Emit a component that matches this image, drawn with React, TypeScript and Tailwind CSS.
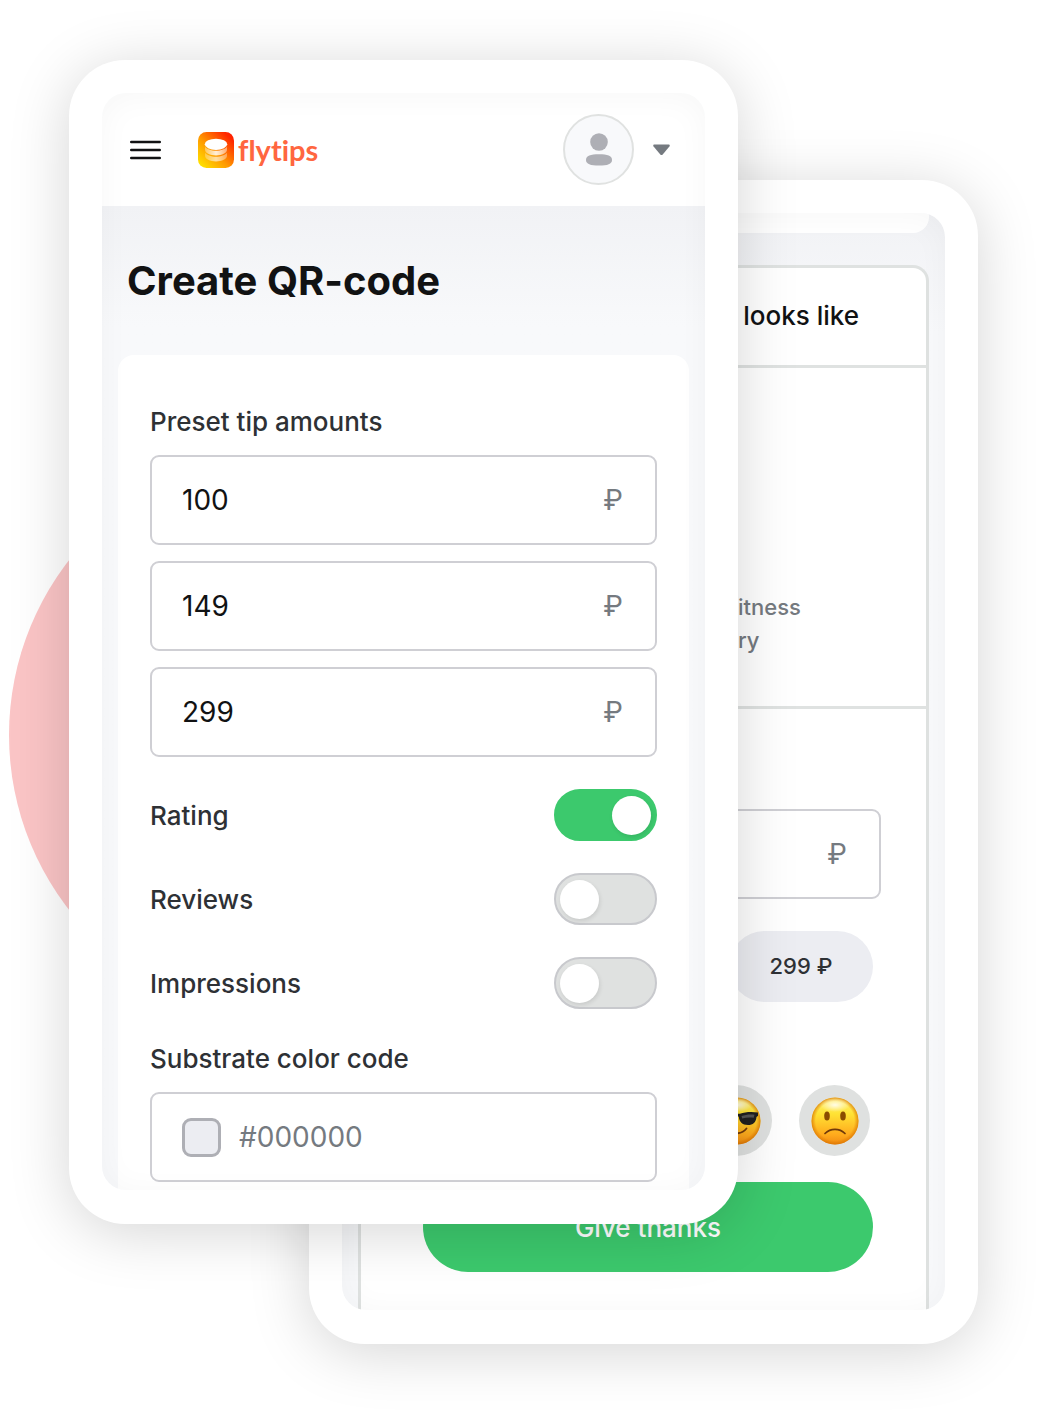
import { ReactNode, useId, useState } from "react";

const fieldBox =
  "flex h-[90px] items-center rounded-[9px] border-2 border-[#cfcfd4] bg-white pl-[30px] pr-8";

function Phone({ className, children }: { className: string; children: ReactNode }) {
  return (
    <section
      className={`relative isolate col-start-1 row-start-1 min-w-0 self-start rounded-[56px] bg-white px-[33px] pb-[34px] pt-[33px] shadow-[0_8px_60px_rgba(0,0,0,0.17)] ${className}`}
    >
      <div className="relative overflow-hidden rounded-[24px] bg-[#f8f9fb]">
        {children}
        <div className="pointer-events-none absolute inset-0 rounded-[24px] shadow-[inset_0_3px_32px_rgba(0,0,0,0.035)]" />
      </div>
    </section>
  );
}

function AmountField({ label, initial }: { label: string; initial: string }) {
  const [value, setValue] = useState(initial);
  return (
    <label className={fieldBox}>
      <input
        aria-label={label}
        value={value}
        onChange={(e) => setValue(e.target.value)}
        className="w-0 min-w-0 flex-1 bg-transparent text-[28px] text-[#111213] outline-none"
      />
      <span className="text-[28px] text-[#757a80]">₽</span>
    </label>
  );
}

function Toggle({ label, on = false }: { label: string; on?: boolean }) {
  const id = useId();
  return (
    <div className="flex items-center justify-between">
      <label htmlFor={id} className="text-[26px] font-medium text-[#2e3135]">
        {label}
      </label>
      <input
        id={id}
        type="checkbox"
        role="switch"
        defaultChecked={on}
        className="flex h-[52px] w-[103px] cursor-pointer appearance-none items-center rounded-full border-2 border-[#c8c9cd] bg-[#dfe1e0] px-1 before:size-[39px] before:rounded-full before:bg-white before:shadow-[1px_2px_4px_rgba(0,0,0,0.1)] checked:justify-end checked:border-[#3cc96d] checked:bg-[#3cc96d]"
      />
    </div>
  );
}

function LogoMark() {
  return (
    <svg width="36" height="36" viewBox="0 0 36 36" aria-hidden="true">
      <defs>
        <linearGradient id="logoBg" x1="0" y1="1" x2="1" y2="0">
          <stop offset="0" stopColor="#ffee00" />
          <stop offset="0.45" stopColor="#ff9800" />
          <stop offset="0.85" stopColor="#ff2a00" />
          <stop offset="1" stopColor="#ff1500" />
        </linearGradient>
        <linearGradient id="coin" x1="0" x2="1">
          <stop offset="0" stopColor="#fff" stopOpacity="0.35" />
          <stop offset="0.5" stopColor="#fff" stopOpacity="0.85" />
          <stop offset="1" stopColor="#fff" stopOpacity="0.45" />
        </linearGradient>
      </defs>
      <rect width="36" height="36" rx="8.5" fill="url(#logoBg)" />
      <path d="M7 20.6c1.500 2.600 6 4.200 11 4.200s9.500-1.600 11-4.200v3.200c0 3.200-5 5.600-11 5.600S7 27 7 23.800z" fill="url(#coin)" opacity="0.75" />
      <path d="M7 14.600c1.500 2.600 6 4.200 11 4.200s9.500-1.600 11-4.200v3.200c0 3.200-5 5.600-11 5.600S7 21 7 17.800z" fill="url(#coin)" />
      <ellipse cx="18" cy="12.300" rx="11.200" ry="5.600" fill="#fff" />
    </svg>
  );
}

function Face({ kind }: { kind: "cool" | "sad" }) {
  return (
    <svg width="48" height="48" viewBox="0 0 48 48" aria-hidden="true">
      <defs>
        <linearGradient id={`face-${kind}`} x1="0" y1="0" x2="0" y2="1">
          <stop offset="0" stopColor="#fff27a" />
          <stop offset="0.35" stopColor="#ffe234" />
          <stop offset="0.8" stopColor="#ffa91c" />
          <stop offset="1" stopColor="#f08a12" />
        </linearGradient>
        <radialGradient id={`rim-${kind}`}>
          <stop offset="0.82" stopColor="#e07800" stopOpacity="0" />
          <stop offset="1" stopColor="#d87400" stopOpacity="0.75" />
        </radialGradient>
        <radialGradient id={`shine-${kind}`}>
          <stop offset="0" stopColor="#fff" stopOpacity="0.85" />
          <stop offset="1" stopColor="#fff" stopOpacity="0" />
        </radialGradient>
      </defs>
      <circle cx="24" cy="24" r="23.500" fill={`url(#face-${kind})`} />
      <circle cx="24" cy="24" r="23.500" fill={`url(#rim-${kind})`} />
      <ellipse cx="24" cy="8" rx="15" ry="7" fill={`url(#shine-${kind})`} />
      {kind === "sad" ? (
        <>
          <ellipse cx="16" cy="19" rx="2.800" ry="4.500" fill="#8a4b00" />
          <ellipse cx="32" cy="19" rx="2.800" ry="4.500" fill="#8a4b00" />
          <path d="M14 36.500c5.500-5.500 14.500-5.500 20 0" fill="none" stroke="#70390a" strokeWidth="1.700" strokeLinecap="round" />
        </>
      ) : (
        <>
          <path d="M3 16c6-1.500 13-1 18 .8h6c5-1.800 11-2.300 18-1.300v3.300l-1.500 1.200c-.5 5.500-3.500 8-8.500 8-6 0-8.500-3-9.300-8.500h-3.400C21.500 25 19 28 13 28c-5 0-8-2.500-8.500-8L3 18.800z" fill="#202020" />
          <path d="M28.500 19c4-1.500 9-2 13-1.300l-.8 3c-4-.6-8-.3-11.500.8z" fill="#555" />
          <path d="M16 34c5 3.800 13 3 17.500-2.500" fill="none" stroke="#70390a" strokeWidth="1.800" strokeLinecap="round" />
        </>
      )}
    </svg>
  );
}

function PreviewPhone() {
  return (
    <Phone className="ml-[240px] mt-[120px]">
      <div className="bg-linear-to-b from-[#f1f2f5] to-[#f8f9fb] to-[120px] px-4">
        <div className="h-5 rounded-b-[16px] bg-white" />
        <div className="mt-8 rounded-t-[16px] border-x-[3px] border-t-[3px] border-[#dfe2e1] bg-white">
          <h2 className="border-b-[3px] border-[#dfe2e1] pb-[33px] pr-[67px] pt-8 text-right text-[26px] leading-8 font-medium text-[#111213]">
            looks like
          </h2>
          <div className="border-b-[3px] border-[#dfe2e1] pb-[49px] pt-[223px]">
            <p className="ml-auto w-[188px] text-[22px] leading-[33px] font-medium text-[#757a80]">
              itness
              <br />
              ry
            </p>
          </div>
          <div className="pb-[38px] pl-[54px] pr-[45px] pt-[100px]">
            <label className={fieldBox}>
              <input aria-label="Tip amount" className="w-0 min-w-0 flex-1 bg-transparent text-[28px] outline-none" />
              <span className="text-[28px] text-[#757a80]">₽</span>
            </label>
            <div className="mt-8 flex justify-end px-2">
              <button className="h-[71px] w-[144px] rounded-full bg-[#ecedf2] text-[22px] font-medium text-[#2e3135]">
                299 ₽
              </button>
            </div>
            <div className="mt-[83px] flex justify-end gap-[27px] px-[11px]">
              <button aria-label="Cool" className="flex size-[71px] items-center justify-center rounded-full bg-[#dfe1e0]">
                <Face kind="cool" />
              </button>
              <button aria-label="Sad" className="flex size-[71px] items-center justify-center rounded-full bg-[#dfe1e0]">
                <Face kind="sad" />
              </button>
            </div>
            <div className="mt-[26px] px-2">
              <button className="h-[90px] w-full rounded-full bg-[#3cc96d] text-[26px] font-medium text-white">
                Give thanks
              </button>
            </div>
          </div>
        </div>
      </div>
    </Phone>
  );
}

function EditorPhone() {
  return (
    <Phone className="mr-[240px]">
      <header className="flex h-[113px] items-center bg-white pl-7 pr-[35px]">
        <button aria-label="Menu">
          <svg width="31" height="20" viewBox="0 0 31 20" stroke="#111213" strokeWidth="2.400" strokeLinecap="round">
            <path d="M1.200 2h28.600M1.200 10h28.600M1.200 18h28.600" />
          </svg>
        </button>
        <a href="#" className="ml-[37px] flex items-center gap-1">
          <LogoMark />
          <span className="font-['Lato'] text-[29px] leading-9 font-bold text-[#ff6640] [font-variant-ligatures:none]">
            flytips
          </span>
        </a>
        <button aria-label="Account" className="ml-auto flex items-center gap-[19px]">
          <span className="flex size-[71px] items-center justify-center rounded-full border-2 border-[#e0e2e1] bg-[#f8f9fb]">
            <svg width="26" height="33" viewBox="0 0 26 33" fill="#aeafb5">
              <circle cx="13" cy="9" r="8.800" />
              <path d="M13 21.300c8.500 0 13 1.500 13 5.600s-4.500 5.600-13 5.600-13-1.500-13-5.600 4.500-5.600 13-5.600z" />
            </svg>
          </span>
          <svg width="17" height="12" viewBox="0 0 17 12" fill="#757a80">
            <path d="M1.500.5h14c1.200 0 1.600 1 .9 1.900l-6.700 8c-.7.8-1.700.8-2.400 0l-6.700-8C-.1 1.500.3.500 1.500.5z" />
          </svg>
        </button>
      </header>
      <main className="bg-linear-to-b from-[#f1f2f5] to-[#f8f9fb] to-[120px] px-4">
        <h1 className="py-[50px] pl-[9px] text-[40px] leading-[49px] font-bold text-[#111213]">Create QR-code</h1>
        <form className="rounded-t-[16px] bg-white px-8 pb-2 pt-12" onSubmit={(e) => e.preventDefault()}>
          <fieldset>
            <legend className="mb-[14px] text-[26px] leading-[38px] font-medium text-[#2e3135]">
              Preset tip amounts
            </legend>
            <div className="flex flex-col gap-4">
              <AmountField label="First amount" initial="100" />
              <AmountField label="Second amount" initial="149" />
              <AmountField label="Third amount" initial="299" />
            </div>
          </fieldset>
          <div className="mt-8 flex flex-col gap-8">
            <Toggle label="Rating" on />
            <Toggle label="Reviews" />
            <Toggle label="Impressions" />
          </div>
          <label
            htmlFor="substrate"
            className="mb-[14px] mt-[31px] block text-[26px] leading-[38px] font-medium text-[#2e3135]"
          >
            Substrate color code
          </label>
          <div className={fieldBox}>
            <button
              type="button"
              aria-label="Pick a color"
              className="size-[39px] rounded-[9px] border-[3px] border-[#aeafb5] bg-[#ecedf2]"
            />
            <input
              id="substrate"
              placeholder="#000000"
              className="ml-[18px] w-0 min-w-0 flex-1 bg-transparent text-[28px] outline-none placeholder:text-[#757a80]"
            />
          </div>
        </form>
      </main>
    </Phone>
  );
}

export default function App() {
  return (
    <div className="relative overflow-hidden bg-white pb-[75px] pl-[69px] pr-[65px] pt-[60px] font-['Inter',sans-serif]">
      <div className="absolute left-[9px] top-[450px] size-[570px] rounded-full bg-[#fbc5c6]" />
      <div className="relative grid grid-cols-1">
        <PreviewPhone />
        <EditorPhone />
      </div>
    </div>
  );
}
